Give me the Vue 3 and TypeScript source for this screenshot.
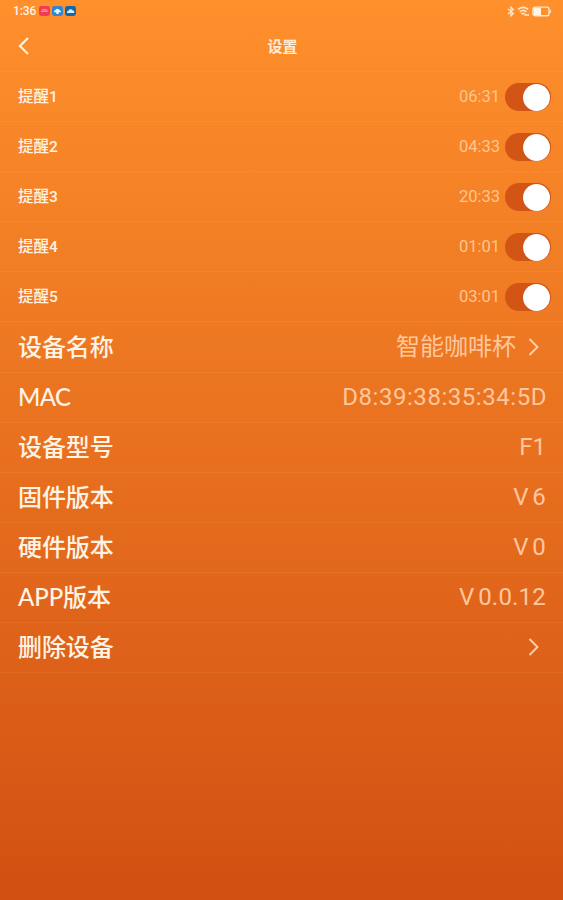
<script setup lang="ts">
import { ref } from 'vue'

interface Reminder {
  label: string
  time: string
  on: boolean
}

interface Item {
  label: string
  value?: string
  kind?: string
  link?: boolean
}

const reminders = ref<Reminder[]>([
  { label: '提醒1', time: '06:31', on: true },
  { label: '提醒2', time: '04:33', on: true },
  { label: '提醒3', time: '20:33', on: true },
  { label: '提醒4', time: '01:01', on: true },
  { label: '提醒5', time: '03:01', on: true },
])

const items: Item[] = [
  { label: '设备名称', value: '智能咖啡杯', kind: 'name', link: true },
  { label: 'MAC', value: 'D8:39:38:35:34:5D', kind: 'mac' },
  { label: '设备型号', value: 'F1' },
  { label: '固件版本', value: 'V 6', kind: 'version' },
  { label: '硬件版本', value: 'V 0', kind: 'version' },
  { label: 'APP版本', value: 'V 0.0.12', kind: 'version' },
  { label: '删除设备', link: true },
]
</script>

<template>
  <main class="screen">
    <div class="status">
      <div class="status-left">
        <span class="clock">1:36</span>
        <svg class="app" viewBox="0 0 11 10">
          <rect width="11" height="10" rx="2.4" fill="#f23c55" />
          <path d="M2 5.2h7M3 3.7h5" stroke="#ffa9a5" stroke-width="1.1" />
        </svg>
        <svg class="app" viewBox="0 0 11 10">
          <rect width="11" height="10" rx="2.4" fill="#3386ce" />
          <path d="M2 6.2a1.6 1.6 0 0 1 1.2-2 2.4 2.4 0 0 1 4.5 0A1.6 1.6 0 0 1 9 6.2zM4.3 6h2.4v2H4.3z" fill="#e5f4ff" />
        </svg>
        <svg class="app" viewBox="0 0 11 10">
          <rect width="11" height="10" rx="2.4" fill="#1267ac" />
          <path d="M2 7a1.5 1.5 0 0 1 1.3-2 2.4 2.4 0 0 1 4.4-.5A1.5 1.5 0 0 1 9 7z" fill="#d8edfa" />
        </svg>
      </div>
      <div class="status-right">
        <svg width="8" height="11" viewBox="0 0 8 11" fill="none" stroke="#ffe6cb" stroke-width="1.3">
          <path d="M1 3l5.3 4.6L4 9.8V1.2l2.3 2.2L1 8" />
        </svg>
        <svg width="13" height="11" viewBox="0 0 13 11" fill="none" stroke="#ffe3c6" stroke-width="1.7">
          <path d="M1 3.4q5-4 10.2 0M2.8 5.8q3.4-2.8 6.7 0M4.5 8q1.7-1.3 3.3 0" />
          <path d="M7.5 9h4.5" />
        </svg>
        <svg width="20" height="11" viewBox="0 0 20 11">
          <rect x="1" y="1.1" width="16" height="8.6" rx="2" fill="none" stroke="#ffe6ca" stroke-width="1.4" />
          <rect x="1.8" y="1.8" width="7.2" height="7.2" rx="1" fill="#fff5e8" />
          <path d="M18.3 3.8v3.2" stroke="#ffe6ca" stroke-width="1.2" />
        </svg>
      </div>
    </div>

    <header class="header">
      <button class="back" aria-label="返回">
        <svg width="12" height="18" viewBox="0 0 12 18">
          <path d="M10 1L2 9l8 8" fill="none" stroke="#fff3dc" stroke-width="2.2" />
        </svg>
      </button>
      <h1>设置</h1>
    </header>

    <section class="list">
      <div v-for="r in reminders" :key="r.label" class="row small">
        <span class="label">{{ r.label }}</span>
        <span class="time">{{ r.time }}</span>
        <button class="toggle" :class="{ on: r.on }" role="switch" :aria-checked="r.on" @click="r.on = !r.on">
          <span class="thumb"></span>
        </button>
      </div>
      <div v-for="item in items" :key="item.label" class="row">
        <span class="label" :class="item.kind">{{ item.label }}</span>
        <span v-if="item.value" class="value" :class="item.kind">{{ item.value }}</span>
        <svg v-if="item.link" class="chevron" width="12" height="20" viewBox="0 0 12 20">
          <path d="M1.5 2l8 8-8 8" fill="none" stroke="#ffcfaa" stroke-width="1.9" />
        </svg>
      </div>
    </section>
  </main>
</template>

<style>
body {
  margin: 0;
}
</style>

<style scoped>
.screen {
  box-sizing: border-box;
  height: 900px;
  overflow: hidden;
  background: linear-gradient(180deg, #ff902c 0%, #d15012 100%);
  color: #fff3e4;
  font-family: Lato, 'Noto Sans CJK SC', sans-serif;
}

button {
  border: 0;
  padding: 0;
  background: none;
}

.status {
  box-sizing: border-box;
  height: 22px;
  padding: 0 11px 0 13px;
  display: flex;
  align-items: center;
  justify-content: space-between;
}

.status-left,
.status-right {
  display: flex;
  align-items: center;
  gap: 2px;
}

.clock {
  width: 24px;
  font-family: Roboto, sans-serif;
  font-size: 12px;
  line-height: 22px;
  font-weight: 500;
  letter-spacing: -0.1px;
}

.app {
  width: 11px;
  height: 10px;
}

.header {
  height: 49px;
  display: grid;
  grid-template-columns: 40px 1fr 40px;
  align-items: center;
}

.back {
  height: 20px;
  padding-left: 18px;
  display: flex;
}

h1 {
  margin: 0;
  padding: 0 0 2px 2px;
  font-size: 15px;
  line-height: 22px;
  font-weight: 700;
  text-align: center;
  color: #ffecd6;
}

.list {
  border-top: 1px solid rgba(255, 190, 110, 0.11);
}

.row {
  box-sizing: border-box;
  height: 50.1px;
  padding: 0 17px 0 18px;
  display: flex;
  align-items: center;
  border-bottom: 1px solid rgba(255, 190, 110, 0.11);
  font-size: 24px;
  line-height: 34px;
}

.label {
  flex: 1;
  padding-bottom: 1px;
  font-weight: 500;
  letter-spacing: -0.1px;
}

.label.mac {
  letter-spacing: -0.6px;
}

.small {
  padding-right: 12px;
  font-size: 15px;
}

.small .label {
  padding: 1px 0 0;
  font-family: Roboto, 'Noto Sans CJK SC', sans-serif;
  font-size: 15.5px;
  letter-spacing: 0;
}

.time {
  margin-right: 5px;
  font-family: Roboto, sans-serif;
  font-size: 16.5px;
  color: #ffc58f;
}

.toggle {
  box-sizing: border-box;
  width: 45.5px;
  height: 28px;
  margin: 1px 0.5px 0 0;
  padding-right: 0.5px;
  border-radius: 14px;
  background: #f0a060;
  display: flex;
  align-items: center;
}

.toggle.on {
  background: #d35516;
  justify-content: flex-end;
}

.thumb {
  width: 27px;
  height: 27px;
  border-radius: 50%;
  background: #fff;
  box-shadow: 0 0 1px rgba(120, 50, 10, 0.4);
}

.value {
  padding-bottom: 1px;
  font-family: Roboto, 'Noto Sans CJK SC', sans-serif;
  color: #ffc79e;
}

.value.mac {
  margin-right: -1px;
  letter-spacing: 0.55px;
}

.value.version {
  letter-spacing: 0.2px;
  word-spacing: -2.5px;
}

.value.name {
  margin-right: 1px;
}

.chevron {
  margin: 0 6px 1px 11px;
}
</style>
